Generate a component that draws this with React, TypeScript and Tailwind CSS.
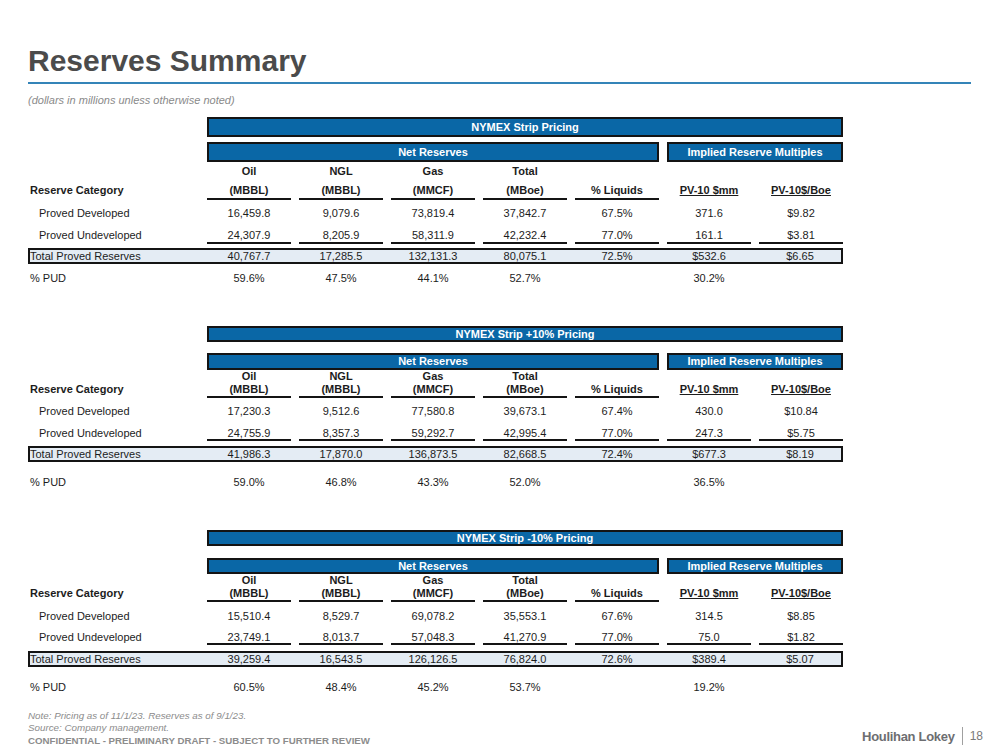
import React from 'react';

type ReserveTable = {
  title: string;
  pd: string[];
  pu: string[];
  total: string[];
  pud: string[];
};

const tables: ReserveTable[] = [
  {
    title: 'NYMEX Strip Pricing',
    pd: ['16,459.8', '9,079.6', '73,819.4', '37,842.7', '67.5%', '371.6', '$9.82'],
    pu: ['24,307.9', '8,205.9', '58,311.9', '42,232.4', '77.0%', '161.1', '$3.81'],
    total: ['40,767.7', '17,285.5', '132,131.3', '80,075.1', '72.5%', '$532.6', '$6.65'],
    pud: ['59.6%', '47.5%', '44.1%', '52.7%', '', '30.2%', ''],
  },
  {
    title: 'NYMEX Strip +10% Pricing',
    pd: ['17,230.3', '9,512.6', '77,580.8', '39,673.1', '67.4%', '430.0', '$10.84'],
    pu: ['24,755.9', '8,357.3', '59,292.7', '42,995.4', '77.0%', '247.3', '$5.75'],
    total: ['41,986.3', '17,870.0', '136,873.5', '82,668.5', '72.4%', '$677.3', '$8.19'],
    pud: ['59.0%', '46.8%', '43.3%', '52.0%', '', '36.5%', ''],
  },
  {
    title: 'NYMEX Strip -10% Pricing',
    pd: ['15,510.4', '8,529.7', '69,078.2', '35,553.1', '67.6%', '314.5', '$8.85'],
    pu: ['23,749.1', '8,013.7', '57,048.3', '41,270.9', '77.0%', '75.0', '$1.82'],
    total: ['39,259.4', '16,543.5', '126,126.5', '76,824.0', '72.6%', '$389.4', '$5.07'],
    pud: ['60.5%', '48.4%', '45.2%', '53.7%', '', '19.2%', ''],
  },
];

// spacing differs a little between the first table and the two below it
const spacing = [
  {
    wrap: 'mt-[10px]',
    title: 'h-5',
    net: 'mt-[5px] h-5',
    head1: 'mt-px h-4 leading-4',
    head2: 'mt-[3px] h-[18px] leading-4',
    pd: 'mt-[5px] h-4 leading-4',
    pu: 'mt-[7px] h-4 leading-[14px]',
    total: 'mt-1',
    pud: 'mt-[6px]',
  },
  {
    wrap: 'mt-10',
    title: 'h-4',
    net: 'mt-[11px] h-[17px]',
    head1: 'h-[13px] leading-[13px]',
    head2: 'h-[15px] leading-[13px]',
    pd: 'mt-[5px] h-4 leading-4',
    pu: 'mt-2 h-[14px] leading-3',
    total: 'mt-[5px]',
    pud: 'mt-3',
  },
  {
    wrap: 'mt-10',
    title: 'h-4',
    net: 'mt-3 h-4',
    head1: 'h-[13px] leading-[13px]',
    head2: 'h-[15px] leading-[13px]',
    pd: 'mt-[6px] h-4 leading-4',
    pu: 'mt-[7px] h-[14px] leading-3',
    total: 'mt-[6px]',
    pud: 'mt-3',
  },
];

const grid = 'grid grid-cols-[171px_repeat(7,84px)] gap-x-2';
const bar =
  'flex items-center justify-center border-2 border-[#141414] bg-[#0a67a6] text-[11px] font-bold leading-none text-white';

const heads = [
  { top: 'Oil', bottom: '(MBBL)' },
  { top: 'NGL', bottom: '(MBBL)' },
  { top: 'Gas', bottom: '(MMCF)' },
  { top: 'Total', bottom: '(MBoe)' },
  { top: '', bottom: '% Liquids' },
  { top: '', bottom: 'PV-10 $mm', link: true },
  { top: '', bottom: 'PV-10$/Boe', link: true },
];

const Table = ({ data, idx }: { data: ReserveTable; idx: number }) => {
  const s = spacing[idx];
  return (
    <div className={`${s.wrap} flex flex-col text-[11px] text-[#1c1c1c]`}>
      <div className={grid}>
        <div className={`col-start-2 col-span-7 ${bar} ${s.title}`}>{data.title}</div>
      </div>
      <div className={`${grid} ${s.net}`}>
        <div className={`col-start-2 col-span-5 ${bar}`}>Net Reserves</div>
        <div className={`col-span-2 ${bar}`}>Implied Reserve Multiples</div>
      </div>

      <div className={`${grid} ${s.head1} font-bold`}>
        <div />
        {heads.map((h, i) => (
          <div key={i} className="text-center">
            {h.top}
          </div>
        ))}
      </div>
      <div className={`${grid} font-bold`}>
        <div className={`${s.head2} pl-[2px]`}>Reserve Category</div>
        {heads.map((h, i) => (
          <div
            key={i}
            className={`${s.head2} text-center ${h.link ? 'underline underline-offset-[1px]' : 'border-b-2 border-[#141414]'}`}
          >
            {h.bottom}
          </div>
        ))}
      </div>

      <div className={`${grid} ${s.pd}`}>
        <div className="pl-[11px]">Proved Developed</div>
        {data.pd.map((v, i) => (
          <div key={i} className="text-center">
            {v}
          </div>
        ))}
      </div>
      <div className={grid}>
        <div className={`${s.pu} pl-[11px]`}>Proved Undeveloped</div>
        {data.pu.map((v, i) => (
          <div key={i} className={`${s.pu} border-b-2 border-[#141414] text-center`}>
            {v}
          </div>
        ))}
      </div>

      <div
        className={`${s.total} grid h-4 w-[815px] grid-cols-[169px_repeat(6,84px)_82px] gap-x-2 border-2 border-[#141414] bg-[#e4ecf4] leading-3`}
      >
        <div>Total Proved Reserves</div>
        {data.total.map((v, i) => (
          <div key={i} className="text-center">
            {v}
          </div>
        ))}
      </div>

      <div className={`${grid} ${s.pud} h-4 leading-4`}>
        <div className="pl-[2px]">% PUD</div>
        {data.pud.map((v, i) => (
          <div key={i} className="text-center">
            {v}
          </div>
        ))}
      </div>
    </div>
  );
};

export default function App() {
  return (
    <div
      className="h-[750px] w-[999px] overflow-hidden bg-white px-[28px]"
      style={{ fontFamily: '"Liberation Sans", Arial, sans-serif' }}
    >
      <h1 className="pt-[46px] text-[30px] font-bold leading-[30px] text-[#4b4b4b]">Reserves Summary</h1>
      <div className="mt-[6px] h-[2px] w-[943px] bg-[#3484b8]" />
      <p className="mt-[10px] h-[13px] text-[11px] italic leading-[13px] text-[#8a8a8a]">
        (dollars in millions unless otherwise noted)
      </p>

      {tables.map((t, i) => (
        <Table key={t.title} data={t} idx={i} />
      ))}

      <div className="mt-[15px] -mr-[12px] flex items-end justify-between">
        <div className="flex flex-col text-[#8c8c8c]">
          <p className="h-3 text-[9.8px] italic leading-3">Note: Pricing as of 11/1/23. Reserves as of 9/1/23.</p>
          <p className="h-[11px] text-[9.8px] italic leading-[11px]">Source: Company management.</p>
          <p className="mt-[2px] h-3 text-[9.7px] font-bold leading-3">
            CONFIDENTIAL - PRELIMINARY DRAFT - SUBJECT TO FURTHER REVIEW
          </p>
        </div>
        <div className="mb-[1px] flex items-center">
          <span className="text-[13px] font-bold tracking-[-0.3px] text-[#6d6e71]">Houlihan Lokey</span>
          <span className="mx-[7px] h-[18px] w-px bg-[#a0a0a0]" />
          <span className="text-[12px] text-[#7a7a7a]">18</span>
        </div>
      </div>
    </div>
  );
}
